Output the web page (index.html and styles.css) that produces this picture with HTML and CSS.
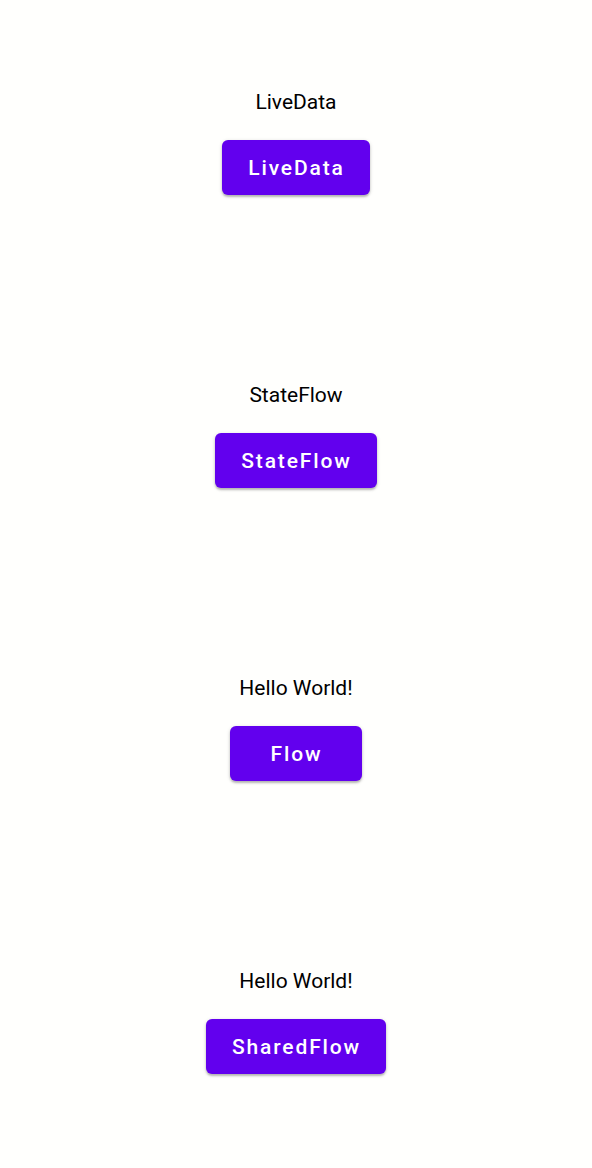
FILE: index.html
```html
<!DOCTYPE html>
<html>
<head>
<meta charset="utf-8">
<link rel="stylesheet" href="styles.css">
</head>
<body>
<main class="screen">
  <section class="block">
    <div class="label">LiveData</div>
    <button class="btn">LiveData</button>
  </section>
  <section class="block">
    <div class="label">StateFlow</div>
    <button class="btn">StateFlow</button>
  </section>
  <section class="block">
    <div class="label">Hello World!</div>
    <button class="btn">Flow</button>
  </section>
  <section class="block">
    <div class="label">Hello World!</div>
    <button class="btn">SharedFlow</button>
  </section>
</main>
</body>
</html>
```
FILE: styles.css
```css
html, body {
  margin: 0;
  padding: 0;
  background: #fffffd;
  overflow: hidden;
}
.screen {
  display: flex;
  flex-direction: column;
  width: 592px;
  height: 1168px;
  font-family: Roboto, "Liberation Sans", sans-serif;
}
.block {
  flex: 0 0 293px;
  display: flex;
  flex-direction: column;
  align-items: center;
  box-sizing: border-box;
  padding-top: 90px;
}
.label {
  font-size: 21px;
  line-height: 25px;
  color: #000;
  font-weight: 400;
}
.btn {
  margin-top: 25px;
  height: 55px;
  min-width: 132px;
  padding: 0 25px 0 26px;
  border: none;
  border-radius: 6px;
  background: #6200ee;
  color: #fff;
  font-family: Roboto, "Liberation Sans", sans-serif;
  font-weight: 500;
  font-size: 21px;
  letter-spacing: 1.87px;
  box-shadow: 0 2px 2px rgba(0,0,0,0.22), 0 1px 4px rgba(0,0,0,0.14);
}
```
